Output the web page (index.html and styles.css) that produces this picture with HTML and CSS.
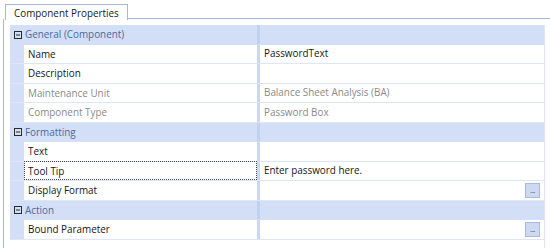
FILE: index.html
```html
<!DOCTYPE html>
<html>
<head>
<meta charset="utf-8">
<link rel="stylesheet" href="styles.css">
</head>
<body>
<div class="window">
  <div class="tabstrip">
    <div class="tab">Component Properties</div>
    <div class="tab-fill"></div>
  </div>
  <div class="panel">
    <div class="grid">
      <div class="row cat">
        <span class="toggle"><svg width="8" height="8" viewBox="0 0 8 8"><rect x="0.5" y="0.5" width="7" height="7" fill="none" stroke="#2a2a2a" stroke-width="1"/><rect x="2" y="3.5" width="4" height="1" fill="#2a2a2a"/></svg></span>
        <span class="cat-name">General (Component)</span>
        <span class="divider"></span>
        <span class="cat-fill"></span>
      </div>
      <div class="row">
        <span class="gutter"></span>
        <span class="name">Name</span>
        <span class="divider"></span>
        <span class="value">PasswordText</span>
      </div>
      <div class="row">
        <span class="gutter"></span>
        <span class="name">Description</span>
        <span class="divider"></span>
        <span class="value"></span>
      </div>
      <div class="row">
        <span class="gutter"></span>
        <span class="name muted">Maintenance Unit</span>
        <span class="divider"></span>
        <span class="value muted">Balance Sheet Analysis (BA)</span>
      </div>
      <div class="row">
        <span class="gutter"></span>
        <span class="name muted">Component Type</span>
        <span class="divider"></span>
        <span class="value muted">Password Box</span>
      </div>
      <div class="row cat">
        <span class="toggle"><svg width="8" height="8" viewBox="0 0 8 8"><rect x="0.5" y="0.5" width="7" height="7" fill="none" stroke="#2a2a2a" stroke-width="1"/><rect x="2" y="3.5" width="4" height="1" fill="#2a2a2a"/></svg></span>
        <span class="cat-name">Formatting</span>
        <span class="divider"></span>
        <span class="cat-fill"></span>
      </div>
      <div class="row">
        <span class="gutter"></span>
        <span class="name">Text</span>
        <span class="divider"></span>
        <span class="value"></span>
      </div>
      <div class="row">
        <span class="gutter"></span>
        <span class="name focused">Tool Tip</span>
        <span class="divider"></span>
        <span class="value">Enter password here.</span>
      </div>
      <div class="row">
        <span class="gutter"></span>
        <span class="name">Display Format</span>
        <span class="divider"></span>
        <span class="value"><span class="value-text"></span><span class="ellipsis">...</span></span>
      </div>
      <div class="row cat">
        <span class="toggle"><svg width="8" height="8" viewBox="0 0 8 8"><rect x="0.5" y="0.5" width="7" height="7" fill="none" stroke="#2a2a2a" stroke-width="1"/><rect x="2" y="3.5" width="4" height="1" fill="#2a2a2a"/></svg></span>
        <span class="cat-name">Action</span>
        <span class="divider"></span>
        <span class="cat-fill"></span>
      </div>
      <div class="row">
        <span class="gutter"></span>
        <span class="name">Bound Parameter</span>
        <span class="divider"></span>
        <span class="value"><span class="value-text"></span><span class="ellipsis">...</span></span>
      </div>
    </div>
  </div>
</div>
</body>
</html>
```
FILE: styles.css
```css
html, body {
  margin: 0;
  padding: 0;
  background: #ffffff;
}
body {
  font-family: "Open Sans", "Noto Sans", sans-serif;
  font-size: 9.9px;
  color: #161616;
  width: 550px;
  height: 248px;
  overflow: hidden;
}
.window {
  margin-left: 3px;
  height: 248px;
  display: flex;
  flex-direction: column;
}
.tabstrip {
  display: flex;
  align-items: flex-end;
  height: 19px;
  flex: none;
}
.tab {
  margin-left: 2px;
  height: 15px;
  padding: 0 8px 0 8px;
  border: 1px solid #a7b7d6;
  border-bottom: none;
  background: #fff;
  line-height: 16px;
  color: #1a1a1a;
  position: relative;
  top: 1px;
}
.tab-fill {
  flex: 1;
  border-bottom: 1px solid #a7b7d6;
}
.panel {
  flex: 1;
  border-left: 1px solid #a7b7d6;
  padding: 6px 0 0 6px;
  display: flex;
}
.grid {
  width: 534px;
  border-right: 1px solid #dde6f5;
  display: flex;
  flex-direction: column;
}
.row {
  display: flex;
  height: 19.5px;
  box-sizing: border-box;
  border-bottom: 1px solid #dde6f5;
  line-height: 19px;
}
.row.cat {
  background: #d3dff6;
  border-bottom-color: #d3dff6;
}
.gutter {
  width: 14px;
  flex: none;
  background: #d3dff6;
}
.toggle {
  width: 14px;
  flex: none;
  display: flex;
  align-items: center;
  justify-content: center;
  padding-left: 2px;
  padding-top: 1px;
  box-sizing: border-box;
}
.toggle svg {
  display: block;
}
.cat-name {
  width: 233px;
  flex: none;
  color: #4a6a9c;
  padding-left: 1px;
  box-sizing: border-box;
}
.cat-fill {
  flex: 1;
}
.name {
  width: 233px;
  flex: none;
  padding-left: 4px;
  box-sizing: border-box;
  white-space: nowrap;
}
.name.focused {
  border: 1px dotted #444;
  margin-top: -1px;
  height: 19.5px;
  padding-left: 3px;
  line-height: 18px;
  box-sizing: border-box;
}
.divider {
  width: 3px;
  flex: none;
  background: #c9d7ef;
}
.row.cat .divider {
  background: #c2d1ec;
}
.value {
  flex: 1;
  padding-left: 4px;
  display: flex;
  align-items: center;
  white-space: nowrap;
}
.value-text {
  flex: 1;
}
.muted {
  color: #8a8a8a;
}
.ellipsis {
  width: 13px;
  height: 13px;
  margin-right: 4px;
  margin-top: 1px;
  background: #cdd9f1;
  border: 1px solid #a9b9da;
  font-size: 8px;
  line-height: 11px;
  text-align: center;
  color: #444;
  letter-spacing: -0.5px;
}
```
